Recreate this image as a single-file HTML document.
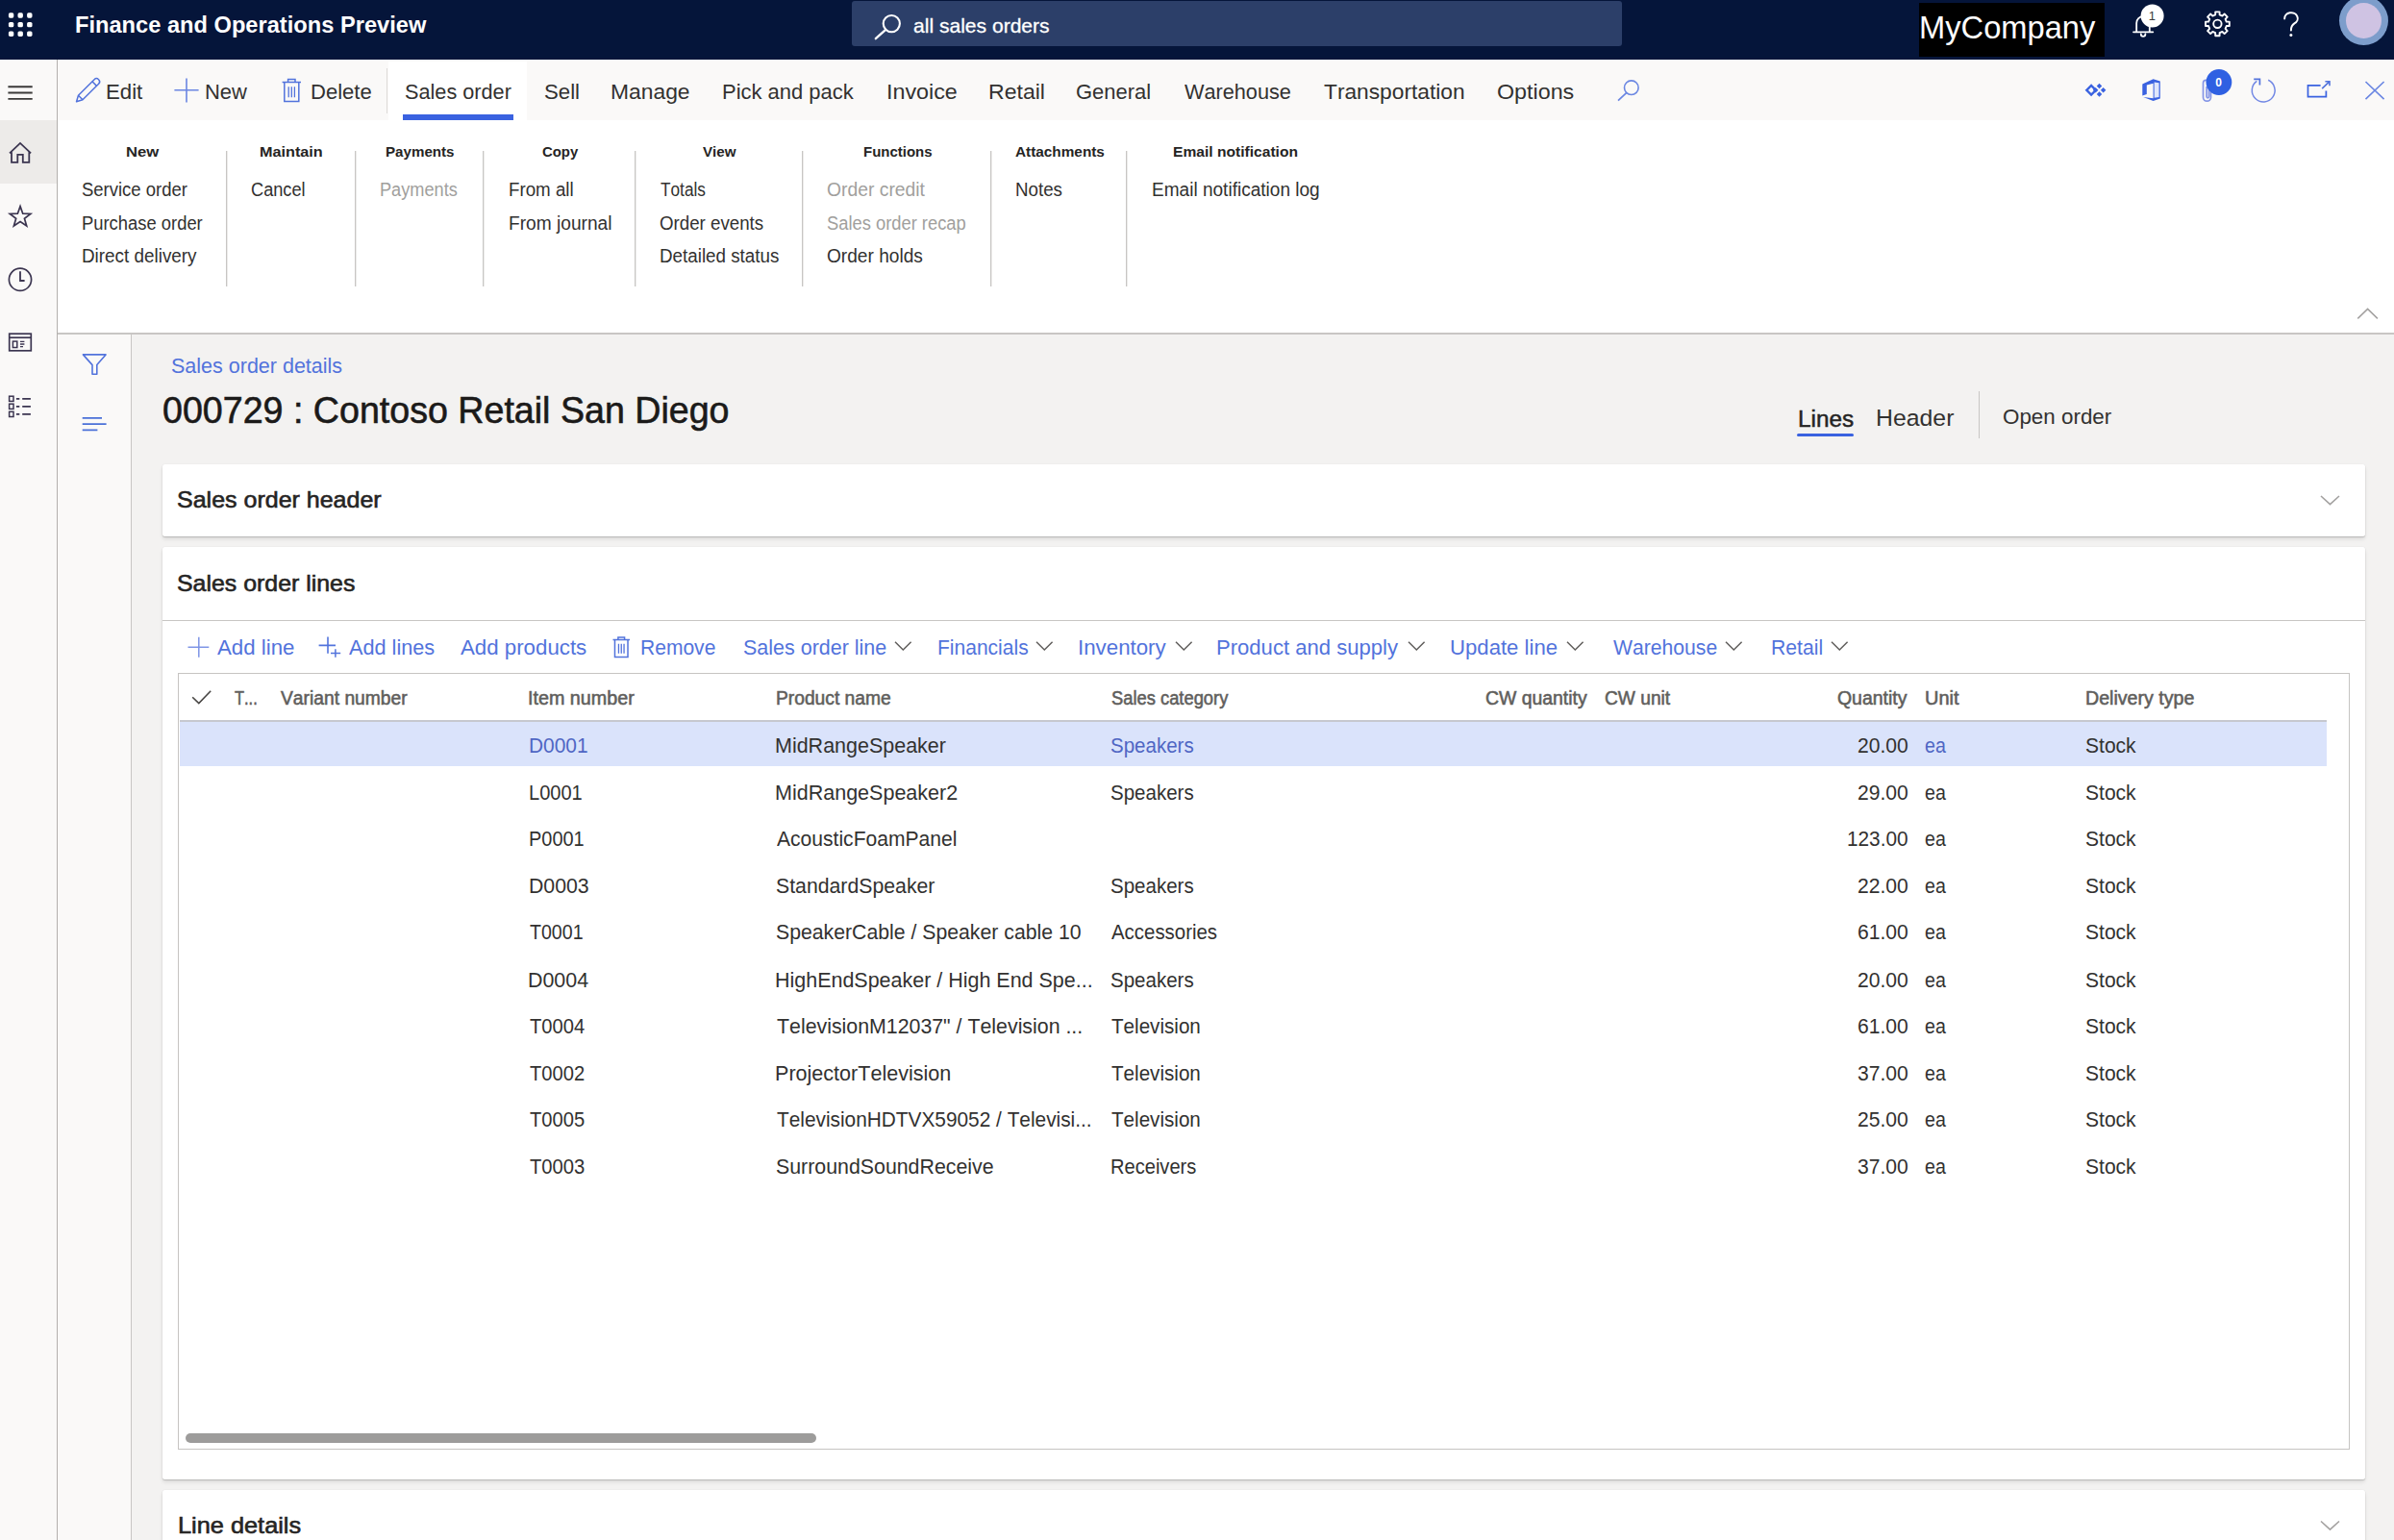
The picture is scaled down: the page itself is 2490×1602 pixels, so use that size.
<!DOCTYPE html>
<html><head><meta charset="utf-8"><title>Sales order details</title>
<style>
html,body{margin:0;padding:0;}
body{width:2490px;height:1602px;overflow:hidden;position:relative;background:#f3f2f1;font-family:"Liberation Sans", sans-serif;}
.t{position:absolute;white-space:pre;font-family:"Liberation Sans", sans-serif;font-kerning:none;}
.b{position:absolute;}
svg{position:absolute;overflow:visible;}
</style></head><body>
<div class="b" style="left:0px;top:0px;width:2490px;height:62px;background:#05153a;"></div>
<div class="b" style="left:886px;top:1px;width:801px;height:47px;background:#2c3f69;border-radius:3px;"></div>
<div class="b" style="left:1996px;top:3px;width:193px;height:56px;background:#000;"></div>
<div class="b" style="left:0px;top:62px;width:59px;height:1540px;background:#faf9f8;"></div>
<div class="b" style="left:0px;top:125.4px;width:59px;height:65.6px;background:#edebe9;"></div>
<div class="b" style="left:59px;top:62px;width:1.4px;height:1540px;background:#b3b0ad;"></div>
<div class="b" style="left:60.3px;top:62px;width:2429.7px;height:63.4px;background:#faf9f8;"></div>
<div class="b" style="left:403.5px;top:64.4px;width:144px;height:61px;background:#fff;"></div>
<div class="b" style="left:402px;top:70.5px;width:1.3px;height:47px;background:#dddbd9;"></div>
<div class="b" style="left:419px;top:119.4px;width:114.7px;height:6.0px;background:#3a62e0;"></div>
<div class="b" style="left:60.3px;top:125.4px;width:2429.7px;height:220.6px;background:#fff;"></div>
<div class="b" style="left:60.3px;top:346px;width:2429.7px;height:1.5px;background:#c8c6c4;"></div>
<div class="b" style="left:60.3px;top:347.5px;width:76px;height:1254.5px;background:#faf9f8;"></div>
<div class="b" style="left:136.2px;top:347.5px;width:1.3px;height:1254.5px;background:#c8c6c4;"></div>
<div class="b" style="left:235px;top:157px;width:1px;height:141px;background:#c8c6c4;"></div>
<div class="b" style="left:236px;top:157px;width:1px;height:141px;background:#ecebea;"></div>
<div class="b" style="left:369px;top:157px;width:1px;height:141px;background:#c8c6c4;"></div>
<div class="b" style="left:370px;top:157px;width:1px;height:141px;background:#ecebea;"></div>
<div class="b" style="left:502px;top:157px;width:1px;height:141px;background:#c8c6c4;"></div>
<div class="b" style="left:503px;top:157px;width:1px;height:141px;background:#ecebea;"></div>
<div class="b" style="left:660px;top:157px;width:1px;height:141px;background:#c8c6c4;"></div>
<div class="b" style="left:661px;top:157px;width:1px;height:141px;background:#ecebea;"></div>
<div class="b" style="left:834px;top:157px;width:1px;height:141px;background:#c8c6c4;"></div>
<div class="b" style="left:835px;top:157px;width:1px;height:141px;background:#ecebea;"></div>
<div class="b" style="left:1030px;top:157px;width:1px;height:141px;background:#c8c6c4;"></div>
<div class="b" style="left:1031px;top:157px;width:1px;height:141px;background:#ecebea;"></div>
<div class="b" style="left:1171px;top:157px;width:1px;height:141px;background:#c8c6c4;"></div>
<div class="b" style="left:1172px;top:157px;width:1px;height:141px;background:#ecebea;"></div>
<div class="b" style="left:2057.5px;top:406.5px;width:1.3px;height:49px;background:#c8c6c4;"></div>
<div class="b" style="left:1868.6px;top:450.6px;width:59px;height:3.8px;background:#3a62e0;border-radius:2px;"></div>
<div class="b" style="left:169px;top:482.5px;width:2291px;height:75.5px;background:#fff;box-shadow:0 1px 1.2px rgba(0,0,0,.17),0 3px 4px rgba(0,0,0,.09),0 0 2px rgba(0,0,0,.05);border-radius:2.5px;"></div>
<div class="b" style="left:169px;top:569.4px;width:2291px;height:970.1px;background:#fff;box-shadow:0 1px 1.2px rgba(0,0,0,.17),0 3px 4px rgba(0,0,0,.09),0 0 2px rgba(0,0,0,.05);border-radius:2.5px;"></div>
<div class="b" style="left:169px;top:1549.5px;width:2291px;height:80px;background:#fff;box-shadow:0 1px 1.2px rgba(0,0,0,.17),0 3px 4px rgba(0,0,0,.09),0 0 2px rgba(0,0,0,.05);border-radius:2.5px;"></div>
<div class="b" style="left:169px;top:645px;width:2291px;height:1.3px;background:#c8c6c4;"></div>
<div class="b" style="left:185px;top:699.8px;width:2259px;height:808.2px;background:#fff;box-sizing:border-box;border:1.5px solid #c6c4c2;"></div>
<div class="b" style="left:186.5px;top:749.2px;width:2233.5px;height:1.5px;background:#c6c8cf;"></div>
<div class="b" style="left:186.5px;top:750.7px;width:2233.5px;height:46.8px;background:#dae3fb;"></div>
<div class="b" style="left:192.5px;top:1491px;width:656.2px;height:9.6px;background:#9d9c9b;border-radius:5px;"></div>
<svg style="left:0px;top:0px" width="60" height="60" viewBox="0 0 60 60" ><rect x="8.899999999999999" y="13.3" width="5.4" height="5.4" rx="1.6" fill="#fff"/><rect x="8.899999999999999" y="22.900000000000002" width="5.4" height="5.4" rx="1.6" fill="#fff"/><rect x="8.899999999999999" y="32.5" width="5.4" height="5.4" rx="1.6" fill="#fff"/><rect x="18.5" y="13.3" width="5.4" height="5.4" rx="1.6" fill="#fff"/><rect x="18.5" y="22.900000000000002" width="5.4" height="5.4" rx="1.6" fill="#fff"/><rect x="18.5" y="32.5" width="5.4" height="5.4" rx="1.6" fill="#fff"/><rect x="28.1" y="13.3" width="5.4" height="5.4" rx="1.6" fill="#fff"/><rect x="28.1" y="22.900000000000002" width="5.4" height="5.4" rx="1.6" fill="#fff"/><rect x="28.1" y="32.5" width="5.4" height="5.4" rx="1.6" fill="#fff"/></svg>
<svg style="left:900px;top:8px" width="50" height="40" viewBox="900 8 50 40" ><circle cx="927.3" cy="24.6" r="8.6" fill="none" stroke="#fff" stroke-width="2.1"/><path d="M921.2 30.8 L910.8 40.2" stroke="#fff" stroke-width="2.3" stroke-linecap="round"/></svg>
<svg style="left:2210px;top:0px" width="50" height="60" viewBox="2210 0 50 60" ><path d="M2219 33.3 H2239.3 M2222.2 33.3 V24 a6.8 6.8 0 0 1 13.6 0 V33.3 M2226.8 35.5 a2.3 2.3 0 0 0 4.6 0" fill="none" stroke="#fff" stroke-width="1.8" stroke-linecap="round"/><circle cx="2238.6" cy="16.6" r="12" fill="#fff"/></svg>
<span class="t" style="left:2234.8px;top:9px;font-size:13px;line-height:16px;color:#3b3a39;">1</span>
<svg style="left:2285px;top:5px" width="45" height="45" viewBox="2285 5 45 45" ><path d="M2318.81 22.63 L2318.81 26.97 L2315.73 27.04 L2314.59 29.82 L2316.71 32.05 L2313.65 35.11 L2311.42 32.99 L2308.64 34.13 L2308.57 37.21 L2304.23 37.21 L2304.16 34.13 L2301.38 32.99 L2299.15 35.11 L2296.09 32.05 L2298.21 29.82 L2297.07 27.04 L2293.99 26.97 L2293.99 22.63 L2297.07 22.56 L2298.21 19.78 L2296.09 17.55 L2299.15 14.49 L2301.38 16.61 L2304.16 15.47 L2304.23 12.39 L2308.57 12.39 L2308.64 15.47 L2311.42 16.61 L2313.65 14.49 L2316.71 17.55 L2314.59 19.78 L2315.73 22.56Z" fill="none" stroke="#fff" stroke-width="1.9" stroke-linejoin="round"/><circle cx="2306.4" cy="24.8" r="4.2" fill="none" stroke="#fff" stroke-width="1.9"/></svg>
<svg style="left:2370px;top:8px" width="30" height="34" viewBox="2370 8 30 34" ><path d="M2376.2 19.4 a6.8 6 0 1 1 10.2 5 c-2.6 1.8 -3.5 3 -3.5 7" fill="none" stroke="#fff" stroke-width="2" stroke-linecap="round"/><circle cx="2382.9" cy="36.4" r="1.5" fill="#fff"/></svg>
<div class="b" style="left:0;top:0;width:2490px;height:62px;overflow:hidden;"><div class="b" style="left:2433.2px;top:-3.6px;width:50.8px;height:50.8px;border-radius:50%;background:#7d9dcb;"></div><div class="b" style="left:2440.2px;top:3.4px;width:36.8px;height:36.8px;border-radius:50%;background:#cfc3e3;"></div></div>
<svg style="left:5px;top:85px" width="32" height="22" viewBox="5 85 32 22" ><path d="M8.4 90.2 H33.7 M8.4 96.5 H33.7 M8.4 102.9 H33.7" stroke="#3b3a39" stroke-width="1.9"/></svg>
<svg style="left:5px;top:145px" width="32" height="28" viewBox="5 145 32 28" ><path d="M10 159.4 L21 148.9 L32.1 159.4 M12 158.2 V168.9 H18.3 V160.8 H23.8 V168.9 H30.3 V158.2" fill="none" stroke="#3b3550" stroke-width="1.8" stroke-linejoin="miter"/></svg>
<svg style="left:5px;top:210px" width="32" height="30" viewBox="5 210 32 30" ><path d="M21.05 214.60 L23.75 222.18 L31.80 222.41 L25.42 227.32 L27.69 235.04 L21.05 230.50 L14.41 235.04 L16.68 227.32 L10.30 222.41 L18.35 222.18Z" fill="none" stroke="#3b3550" stroke-width="1.7" stroke-linejoin="miter"/></svg>
<svg style="left:5px;top:276px" width="32" height="30" viewBox="5 276 32 30" ><circle cx="21" cy="290.8" r="11.6" fill="none" stroke="#3b3550" stroke-width="1.7"/><path d="M21 282.2 V292 H25.6" fill="none" stroke="#3b3550" stroke-width="1.8"/></svg>
<svg style="left:5px;top:343px" width="32" height="26" viewBox="5 343 32 26" ><rect x="9.7" y="347.2" width="22.6" height="17.6" fill="none" stroke="#3b3550" stroke-width="1.7"/><path d="M9.7 351.2 H32.3" stroke="#3b3550" stroke-width="1.7"/><rect x="13.4" y="355.1" width="4.4" height="6.4" fill="none" stroke="#3b3550" stroke-width="1.5"/><path d="M21 355.4 H25.4 M21 358 H25.4 M21 360.7 H24" stroke="#3b3550" stroke-width="1.3"/></svg>
<svg style="left:5px;top:408px" width="32" height="30" viewBox="5 408 32 30" ><rect x="9.6" y="412.2" width="4.4" height="5.2" fill="none" stroke="#3b3550" stroke-width="1.5"/><path d="M16.9 414.8 H20.3 M23.2 414.8 H31.9" stroke="#3b3550" stroke-width="1.7"/><rect x="9.6" y="420.2" width="4.4" height="5.2" fill="none" stroke="#3b3550" stroke-width="1.5"/><path d="M16.9 422.8 H20.3 M23.2 422.8 H31.9" stroke="#3b3550" stroke-width="1.7"/><rect x="9.6" y="428.29999999999995" width="4.4" height="5.2" fill="none" stroke="#3b3550" stroke-width="1.5"/><path d="M16.9 430.9 H20.3 M23.2 430.9 H31.9" stroke="#3b3550" stroke-width="1.7"/></svg>
<svg style="left:75px;top:78px" width="32" height="32" viewBox="75 78 32 32" ><g transform="rotate(-45 91.5 93.8)" fill="none" stroke="#5273dc" stroke-width="1.5" stroke-linejoin="round"><path d="M80.5 90.6 H104 a3.2 3.2 0 0 1 0 6.4 H80.5 L74.6 93.8 Z"/><path d="M80.5 90.6 V97 M101 90.6 V97"/></g></svg>
<svg style="left:178px;top:78px" width="32" height="32" viewBox="178 78 32 32" ><path d="M181.4 93.8 H206.6 M194 81.4 V106.4" stroke="#6a86e2" stroke-width="1.6"/></svg>
<svg style="left:290px;top:78px" width="28" height="32" viewBox="290 78 28 32" ><path d="M293.6 85.40 H313.00 M299.60 85.40 V82.60 H307.00 V85.40 M295.80 85.40 V105.40 H310.80 V85.40" fill="none" stroke="#5273dc" stroke-width="1.5"/><path d="M300.20 90.20 V101.20 M303.30 90.20 V101.20 M306.40 90.20 V101.20" stroke="#5273dc" stroke-width="1.3"/></svg>
<svg style="left:1678px;top:78px" width="32" height="32" viewBox="1678 78 32 32" ><circle cx="1696.8" cy="91.2" r="7.3" fill="none" stroke="#6a86e2" stroke-width="1.6"/><path d="M1691.6 96.6 L1683 104.6" stroke="#6a86e2" stroke-width="1.7"/></svg>
<svg style="left:2165px;top:82px" width="30" height="24" viewBox="2165 82 30 24" ><path d="M2170.2999999999997 93.8 L2175.1 89.0 L2179.9 93.8 L2175.1 98.6Z" fill="none" stroke="#3a62e0" stroke-width="2.4"/><path d="M2180.75 89.6 L2183.5 86.85 L2186.25 89.6 L2183.5 92.35Z" fill="#3a62e0"/><path d="M2184.85 93.8 L2187.6 91.05 L2190.35 93.8 L2187.6 96.55Z" fill="#3a62e0"/><path d="M2180.75 98.0 L2183.5 95.25 L2186.25 98.0 L2183.5 100.75Z" fill="#3a62e0"/><path d="M2176.85 93.8 L2179.6 91.05 L2182.35 93.8 L2179.6 96.55Z" fill="#3a62e0"/></svg>
<svg style="left:2225px;top:80px" width="26" height="28" viewBox="2225 80 26 28" ><path d="M2228.3 99.6 V87.6 L2239.6 82.3 L2246.8 84.6 V102.6 L2239.6 104.9 L2229.2 100.9 L2239.6 102.2 V86.8 L2232.8 88.6 V98 Z" fill="#3a62e0"/><path d="M2240.6 85.6 L2245.6 86.3 V101 L2240.6 101.8Z" fill="#dfe6fb"/></svg>
<svg style="left:2286px;top:70px" width="40" height="40" viewBox="2286 70 40 40" ><path d="M2299.5 88 V101.2 a4 4 0 0 1 -8 0 V86.4 a3 3 0 0 1 6 0 V100.6 a1.2 1.2 0 0 1 -2.4 0 V90" fill="none" stroke="#8495e6" stroke-width="1.7"/><circle cx="2307.9" cy="85.5" r="13.4" fill="#2f60e2"/></svg>
<span class="t" style="left:2304.2px;top:77.6px;font-size:12px;line-height:16px;color:#fff;font-weight:700;">0</span>
<svg style="left:2338px;top:78px" width="32" height="32" viewBox="2338 78 32 32" ><path d="M2359.2 83.3 A11.9 11.9 0 1 1 2347.3 84.4" fill="none" stroke="#7288e4" stroke-width="1.5"/><path d="M2344.2 82.4 H2350.4 V88.4" fill="none" stroke="#5273dc" stroke-width="1.7"/></svg>
<svg style="left:2396px;top:80px" width="30" height="26" viewBox="2396 80 30 26" ><path d="M2413.6 88.9 H2400.5 V100.7 H2419.4 V94.6" fill="none" stroke="#3a62e0" stroke-width="1.7"/><path d="M2415.2 92.2 L2422.8 84.9 M2418.4 84.7 H2423 V89.3" fill="none" stroke="#5273dc" stroke-width="1.6"/></svg>
<svg style="left:2456px;top:80px" width="28" height="28" viewBox="2456 80 28 28" ><path d="M2460.5 85 L2479.6 103.2 M2479.6 85 L2460.5 103.2" stroke="#6a86e2" stroke-width="1.6"/></svg>
<svg style="left:2448px;top:316px" width="30" height="20" viewBox="2448 316 30 20" ><path d="M2452.3 331.4 L2462.6 321.4 L2472.9 331.4" fill="none" stroke="#a3a1a0" stroke-width="1.5"/></svg>
<svg style="left:2410px;top:512px" width="28" height="16" viewBox="2410 512 28 16" ><path d="M2414 516 L2423.5 524.6 L2433 516" fill="none" stroke="#a3a1a0" stroke-width="1.6"/></svg>
<svg style="left:2410px;top:1578px" width="28" height="16" viewBox="2410 1578 28 16" ><path d="M2414 1582.5 L2423.5 1591.1 L2433 1582.5" fill="none" stroke="#a3a1a0" stroke-width="1.6"/></svg>
<svg style="left:82px;top:364px" width="32" height="30" viewBox="82 364 32 30" ><path d="M86.4 368.9 H110 L100.8 379.6 V389.2 H96 V379.6 Z" fill="none" stroke="#5273dc" stroke-width="1.6" stroke-linejoin="round"/></svg>
<svg style="left:82px;top:430px" width="32" height="22" viewBox="82 430 32 22" ><path d="M85.7 434.9 H106 M85.7 441.2 H110.6 M85.7 447.3 H101.4" stroke="#4a70d8" stroke-width="1.7"/></svg>
<svg style="left:192px;top:660px" width="28" height="26" viewBox="192 660 28 26" ><path d="M195.5 673.3 H217.3 M206.8 662.8 V683.8" stroke="#7f95e6" stroke-width="1.5"/></svg>
<svg style="left:328px;top:660px" width="28" height="26" viewBox="328 660 28 26" ><path d="M331.6 671.4 H349 M341 662.4 V679.7" stroke="#5273dc" stroke-width="1.6"/><path d="M344 679.4 H354.2 M348.9 675.2 V683.8" stroke="#5273dc" stroke-width="1.5"/></svg>
<svg style="left:634px;top:658px" width="24" height="30" viewBox="634 658 24 30" ><path d="M637.5 665.46 H655.00 M642.91 665.46 V663.00 H649.59 V665.46 M639.48 665.46 V683.40 H653.02 V665.46" fill="none" stroke="#5273dc" stroke-width="1.5"/><path d="M643.45 669.78 V679.68 M646.25 669.78 V679.68 M649.05 669.78 V679.68" stroke="#5273dc" stroke-width="1.3"/></svg>
<svg style="left:929.2px;top:664px" width="22" height="16" viewBox="929.2 664 22 16" ><path d="M931.2 667.8 L939.5 676 L947.8000000000001 667.8" fill="none" stroke="#605e5c" stroke-width="1.5"/></svg>
<svg style="left:1076.3px;top:664px" width="22" height="16" viewBox="1076.3 664 22 16" ><path d="M1078.3 667.8 L1086.6 676 L1094.8999999999999 667.8" fill="none" stroke="#605e5c" stroke-width="1.5"/></svg>
<svg style="left:1221px;top:664px" width="22" height="16" viewBox="1221 664 22 16" ><path d="M1223 667.8 L1231.3 676 L1239.6 667.8" fill="none" stroke="#605e5c" stroke-width="1.5"/></svg>
<svg style="left:1462.7px;top:664px" width="22" height="16" viewBox="1462.7 664 22 16" ><path d="M1464.7 667.8 L1473.0 676 L1481.3 667.8" fill="none" stroke="#605e5c" stroke-width="1.5"/></svg>
<svg style="left:1627.9px;top:664px" width="22" height="16" viewBox="1627.9 664 22 16" ><path d="M1629.9 667.8 L1638.2 676 L1646.5 667.8" fill="none" stroke="#605e5c" stroke-width="1.5"/></svg>
<svg style="left:1792.5px;top:664px" width="22" height="16" viewBox="1792.5 664 22 16" ><path d="M1794.5 667.8 L1802.8 676 L1811.1 667.8" fill="none" stroke="#605e5c" stroke-width="1.5"/></svg>
<svg style="left:1902.7px;top:664px" width="22" height="16" viewBox="1902.7 664 22 16" ><path d="M1904.7 667.8 L1913.0 676 L1921.3 667.8" fill="none" stroke="#605e5c" stroke-width="1.5"/></svg>
<svg style="left:196px;top:714px" width="28" height="22" viewBox="196 714 28 22" ><path d="M200.2 725.2 L206.8 731.6 L219.2 718.8" fill="none" stroke="#484644" stroke-width="1.6"/></svg>
<span class="t" style="left:78.00px;top:10px;color:#ffffff;font-size:24.5px;line-height:31px;transform-origin:0 0;transform:scaleX(0.9651);font-weight:700;">Finance and Operations Preview</span>
<span class="t" style="left:950.40px;top:13px;color:#ffffff;font-size:21px;line-height:27px;transform-origin:0 0;transform:scaleX(1.0028);-webkit-text-stroke:0.3px #ffffff;">all sales orders</span>
<span class="t" style="left:1996.30px;top:7px;color:#ffffff;font-size:34px;line-height:43px;transform-origin:0 0;transform:scaleX(0.9607);">MyCompany</span>
<span class="t" style="left:109.50px;top:82px;color:#323130;font-size:22.4px;line-height:28px;transform-origin:0 0;transform:scaleX(0.9925);">Edit</span>
<span class="t" style="left:213.00px;top:82px;color:#323130;font-size:22.4px;line-height:28px;transform-origin:0 0;transform:scaleX(0.9815);">New</span>
<span class="t" style="left:323.00px;top:82px;color:#323130;font-size:22.4px;line-height:28px;transform-origin:0 0;transform:scaleX(0.9839);">Delete</span>
<span class="t" style="left:420.80px;top:82px;color:#323130;font-size:22.4px;line-height:28px;transform-origin:0 0;transform:scaleX(0.9682);">Sales order</span>
<span class="t" style="left:565.80px;top:82px;color:#323130;font-size:22.4px;line-height:28px;transform-origin:0 0;transform:scaleX(0.9915);">Sell</span>
<span class="t" style="left:634.80px;top:82px;color:#323130;font-size:22.4px;line-height:28px;transform-origin:0 0;transform:scaleX(1.0206);">Manage</span>
<span class="t" style="left:750.90px;top:82px;color:#323130;font-size:22.4px;line-height:28px;transform-origin:0 0;transform:scaleX(0.9803);">Pick and pack</span>
<span class="t" style="left:921.80px;top:82px;color:#323130;font-size:22.4px;line-height:28px;transform-origin:0 0;transform:scaleX(1.0397);">Invoice</span>
<span class="t" style="left:1027.80px;top:82px;color:#323130;font-size:22.4px;line-height:28px;transform-origin:0 0;transform:scaleX(1.0297);">Retail</span>
<span class="t" style="left:1119.00px;top:82px;color:#323130;font-size:22.4px;line-height:28px;transform-origin:0 0;transform:scaleX(0.9808);">General</span>
<span class="t" style="left:1231.80px;top:82px;color:#323130;font-size:22.4px;line-height:28px;transform-origin:0 0;transform:scaleX(0.9685);">Warehouse</span>
<span class="t" style="left:1377.40px;top:82px;color:#323130;font-size:22.4px;line-height:28px;transform-origin:0 0;transform:scaleX(1.0154);">Transportation</span>
<span class="t" style="left:1556.60px;top:82px;color:#323130;font-size:22.4px;line-height:28px;transform-origin:0 0;transform:scaleX(1.0395);">Options</span>
<span class="t" style="left:131.30px;top:148px;color:#252423;font-size:15.5px;line-height:20px;transform-origin:0 0;transform:scaleX(1.0742);font-weight:700;">New</span>
<span class="t" style="left:270.20px;top:148px;color:#252423;font-size:15.5px;line-height:20px;transform-origin:0 0;transform:scaleX(1.0460);font-weight:700;">Maintain</span>
<span class="t" style="left:401.30px;top:148px;color:#252423;font-size:15.5px;line-height:20px;transform-origin:0 0;transform:scaleX(0.9764);font-weight:700;">Payments</span>
<span class="t" style="left:564.00px;top:148px;color:#252423;font-size:15.5px;line-height:20px;transform-origin:0 0;transform:scaleX(0.9617);font-weight:700;">Copy</span>
<span class="t" style="left:731.00px;top:148px;color:#252423;font-size:15.5px;line-height:20px;transform-origin:0 0;transform:scaleX(0.9780);font-weight:700;">View</span>
<span class="t" style="left:897.50px;top:148px;color:#252423;font-size:15.5px;line-height:20px;transform-origin:0 0;transform:scaleX(0.9671);font-weight:700;">Functions</span>
<span class="t" style="left:1055.60px;top:148px;color:#252423;font-size:15.5px;line-height:20px;transform-origin:0 0;transform:scaleX(0.9894);font-weight:700;">Attachments</span>
<span class="t" style="left:1220.00px;top:148px;color:#252423;font-size:15.5px;line-height:20px;transform-origin:0 0;transform:scaleX(1.0063);font-weight:700;">Email notification</span>
<span class="t" style="left:85.00px;top:185px;color:#323130;font-size:19.5px;line-height:25px;transform-origin:0 0;transform:scaleX(0.9478);">Service order</span>
<span class="t" style="left:85.00px;top:220px;color:#323130;font-size:19.5px;line-height:25px;transform-origin:0 0;transform:scaleX(0.9432);">Purchase order</span>
<span class="t" style="left:85.00px;top:254px;color:#323130;font-size:19.5px;line-height:25px;transform-origin:0 0;transform:scaleX(0.9675);">Direct delivery</span>
<span class="t" style="left:261.00px;top:185px;color:#323130;font-size:19.5px;line-height:25px;transform-origin:0 0;transform:scaleX(0.9322);">Cancel</span>
<span class="t" style="left:395.00px;top:185px;color:#a19f9d;font-size:19.5px;line-height:25px;transform-origin:0 0;transform:scaleX(0.9318);">Payments</span>
<span class="t" style="left:528.60px;top:185px;color:#323130;font-size:19.5px;line-height:25px;transform-origin:0 0;transform:scaleX(0.9605);">From all</span>
<span class="t" style="left:528.60px;top:220px;color:#323130;font-size:19.5px;line-height:25px;transform-origin:0 0;transform:scaleX(0.9823);">From journal</span>
<span class="t" style="left:687.20px;top:185px;color:#323130;font-size:19.5px;line-height:25px;transform-origin:0 0;transform:scaleX(0.8831);">Totals</span>
<span class="t" style="left:686.20px;top:220px;color:#323130;font-size:19.5px;line-height:25px;transform-origin:0 0;transform:scaleX(0.9595);">Order events</span>
<span class="t" style="left:686.20px;top:254px;color:#323130;font-size:19.5px;line-height:25px;transform-origin:0 0;transform:scaleX(0.9641);">Detailed status</span>
<span class="t" style="left:860.00px;top:185px;color:#a19f9d;font-size:19.5px;line-height:25px;transform-origin:0 0;transform:scaleX(0.9902);">Order credit</span>
<span class="t" style="left:860.00px;top:220px;color:#a19f9d;font-size:19.5px;line-height:25px;transform-origin:0 0;transform:scaleX(0.9401);">Sales order recap</span>
<span class="t" style="left:860.00px;top:254px;color:#323130;font-size:19.5px;line-height:25px;transform-origin:0 0;transform:scaleX(0.9803);">Order holds</span>
<span class="t" style="left:1056.00px;top:185px;color:#323130;font-size:19.5px;line-height:25px;transform-origin:0 0;transform:scaleX(0.9600);">Notes</span>
<span class="t" style="left:1197.70px;top:185px;color:#323130;font-size:19.5px;line-height:25px;transform-origin:0 0;transform:scaleX(0.9768);">Email notification log</span>
<span class="t" style="left:177.70px;top:367px;color:#5273dc;font-size:22px;line-height:28px;transform-origin:0 0;transform:scaleX(0.9774);">Sales order details</span>
<span class="t" style="left:169.00px;top:403px;color:#1b1a19;font-size:38.3px;line-height:48px;transform-origin:0 0;transform:scaleX(0.9819);-webkit-text-stroke:0.6px #1b1a19;">000729 : Contoso Retail San Diego</span>
<span class="t" style="left:1869.50px;top:420px;color:#252423;font-size:24.2px;line-height:31px;transform-origin:0 0;transform:scaleX(1.0037);-webkit-text-stroke:0.5px #252423;">Lines</span>
<span class="t" style="left:1950.50px;top:419px;color:#323130;font-size:24.3px;line-height:31px;transform-origin:0 0;transform:scaleX(1.0219);">Header</span>
<span class="t" style="left:2083.00px;top:420px;color:#323130;font-size:22.4px;line-height:28px;transform-origin:0 0;transform:scaleX(1.0000);">Open order</span>
<span class="t" style="left:184.00px;top:504px;color:#252423;font-size:24.3px;line-height:31px;transform-origin:0 0;transform:scaleX(1.0291);-webkit-text-stroke:0.6px #252423;">Sales order header</span>
<span class="t" style="left:184.00px;top:591px;color:#252423;font-size:24.3px;line-height:31px;transform-origin:0 0;transform:scaleX(1.0244);-webkit-text-stroke:0.6px #252423;">Sales order lines</span>
<span class="t" style="left:184.60px;top:1571px;color:#252423;font-size:24.3px;line-height:31px;transform-origin:0 0;transform:scaleX(1.0426);-webkit-text-stroke:0.6px #252423;">Line details</span>
<span class="t" style="left:226.40px;top:660px;color:#5273dc;font-size:22.4px;line-height:28px;transform-origin:0 0;transform:scaleX(0.9938);">Add line</span>
<span class="t" style="left:362.50px;top:660px;color:#5273dc;font-size:22.4px;line-height:28px;transform-origin:0 0;transform:scaleX(0.9685);">Add lines</span>
<span class="t" style="left:478.80px;top:660px;color:#5273dc;font-size:22.4px;line-height:28px;transform-origin:0 0;transform:scaleX(0.9947);">Add products</span>
<span class="t" style="left:665.80px;top:660px;color:#5273dc;font-size:22.4px;line-height:28px;transform-origin:0 0;transform:scaleX(0.9395);">Remove</span>
<span class="t" style="left:772.80px;top:660px;color:#5273dc;font-size:22.4px;line-height:28px;transform-origin:0 0;transform:scaleX(0.9591);">Sales order line</span>
<span class="t" style="left:975.00px;top:660px;color:#5273dc;font-size:22.4px;line-height:28px;transform-origin:0 0;transform:scaleX(0.9389);">Financials</span>
<span class="t" style="left:1121.40px;top:660px;color:#5273dc;font-size:22.4px;line-height:28px;transform-origin:0 0;transform:scaleX(0.9956);">Inventory</span>
<span class="t" style="left:1265.30px;top:660px;color:#5273dc;font-size:22.4px;line-height:28px;transform-origin:0 0;transform:scaleX(0.9858);">Product and supply</span>
<span class="t" style="left:1508.00px;top:660px;color:#5273dc;font-size:22.4px;line-height:28px;transform-origin:0 0;transform:scaleX(0.9893);">Update line</span>
<span class="t" style="left:1677.50px;top:660px;color:#5273dc;font-size:22.4px;line-height:28px;transform-origin:0 0;transform:scaleX(0.9447);">Warehouse</span>
<span class="t" style="left:1842.30px;top:660px;color:#5273dc;font-size:22.4px;line-height:28px;transform-origin:0 0;transform:scaleX(0.9464);">Retail</span>
<span class="t" style="left:244.00px;top:714px;color:#605e5c;font-size:19.4px;line-height:25px;transform-origin:0 0;transform:scaleX(0.8487);-webkit-text-stroke:0.55px #605e5c;">T...</span>
<span class="t" style="left:292.00px;top:714px;color:#605e5c;font-size:19.4px;line-height:25px;transform-origin:0 0;transform:scaleX(0.9933);-webkit-text-stroke:0.55px #605e5c;">Variant number</span>
<span class="t" style="left:549.20px;top:714px;color:#605e5c;font-size:19.4px;line-height:25px;transform-origin:0 0;transform:scaleX(1.0176);-webkit-text-stroke:0.55px #605e5c;">Item number</span>
<span class="t" style="left:807.00px;top:714px;color:#605e5c;font-size:19.4px;line-height:25px;transform-origin:0 0;transform:scaleX(0.9917);-webkit-text-stroke:0.55px #605e5c;">Product name</span>
<span class="t" style="left:1155.50px;top:714px;color:#605e5c;font-size:19.4px;line-height:25px;transform-origin:0 0;transform:scaleX(0.9457);-webkit-text-stroke:0.55px #605e5c;">Sales category</span>
<span class="t" style="left:1545.00px;top:714px;color:#605e5c;font-size:19.4px;line-height:25px;transform-origin:0 0;transform:scaleX(1.0000);-webkit-text-stroke:0.55px #605e5c;">CW quantity</span>
<span class="t" style="left:1668.80px;top:714px;color:#605e5c;font-size:19.4px;line-height:25px;transform-origin:0 0;transform:scaleX(0.9885);-webkit-text-stroke:0.55px #605e5c;">CW unit</span>
<span class="t" style="left:1910.80px;top:714px;color:#605e5c;font-size:19.4px;line-height:25px;transform-origin:0 0;transform:scaleX(1.0028);-webkit-text-stroke:0.55px #605e5c;">Quantity</span>
<span class="t" style="left:2001.60px;top:714px;color:#605e5c;font-size:19.4px;line-height:25px;transform-origin:0 0;transform:scaleX(1.0294);-webkit-text-stroke:0.55px #605e5c;">Unit</span>
<span class="t" style="left:2168.70px;top:714px;color:#605e5c;font-size:19.4px;line-height:25px;transform-origin:0 0;transform:scaleX(1.0117);-webkit-text-stroke:0.55px #605e5c;">Delivery type</span>
<span class="t" style="left:549.60px;top:762px;color:#4f66c4;font-size:22.4px;line-height:28px;transform-origin:0 0;transform:scaleX(0.9337);">D0001</span>
<span class="t" style="left:806.00px;top:762px;color:#323130;font-size:22.4px;line-height:28px;transform-origin:0 0;transform:scaleX(0.9596);">MidRangeSpeaker</span>
<span class="t" style="left:1154.80px;top:762px;color:#4f66c4;font-size:22.4px;line-height:28px;transform-origin:0 0;transform:scaleX(0.9162);">Speakers</span>
<span class="t" style="left:1932.10px;top:762px;color:#323130;font-size:22.4px;line-height:28px;transform-origin:0 0;transform:scaleX(0.9427);">20.00</span>
<span class="t" style="left:2002.00px;top:762px;color:#4f66c4;font-size:22.4px;line-height:28px;transform-origin:0 0;transform:scaleX(0.8750);">ea</span>
<span class="t" style="left:2168.50px;top:762px;color:#323130;font-size:22.4px;line-height:28px;transform-origin:0 0;transform:scaleX(0.9400);">Stock</span>
<span class="t" style="left:549.60px;top:811px;color:#323130;font-size:22.4px;line-height:28px;transform-origin:0 0;transform:scaleX(0.8957);">L0001</span>
<span class="t" style="left:806.00px;top:811px;color:#323130;font-size:22.4px;line-height:28px;transform-origin:0 0;transform:scaleX(0.9610);">MidRangeSpeaker2</span>
<span class="t" style="left:1154.80px;top:811px;color:#323130;font-size:22.4px;line-height:28px;transform-origin:0 0;transform:scaleX(0.9162);">Speakers</span>
<span class="t" style="left:1932.10px;top:811px;color:#323130;font-size:22.4px;line-height:28px;transform-origin:0 0;transform:scaleX(0.9427);">29.00</span>
<span class="t" style="left:2002.00px;top:811px;color:#323130;font-size:22.4px;line-height:28px;transform-origin:0 0;transform:scaleX(0.8750);">ea</span>
<span class="t" style="left:2168.50px;top:811px;color:#323130;font-size:22.4px;line-height:28px;transform-origin:0 0;transform:scaleX(0.9400);">Stock</span>
<span class="t" style="left:549.60px;top:859px;color:#323130;font-size:22.4px;line-height:28px;transform-origin:0 0;transform:scaleX(0.8906);">P0001</span>
<span class="t" style="left:808.00px;top:859px;color:#323130;font-size:22.4px;line-height:28px;transform-origin:0 0;transform:scaleX(0.9414);">AcousticFoamPanel</span>
<span class="t" style="left:1921.00px;top:859px;color:#323130;font-size:22.4px;line-height:28px;transform-origin:0 0;transform:scaleX(0.9284);">123.00</span>
<span class="t" style="left:2002.00px;top:859px;color:#323130;font-size:22.4px;line-height:28px;transform-origin:0 0;transform:scaleX(0.8750);">ea</span>
<span class="t" style="left:2168.50px;top:859px;color:#323130;font-size:22.4px;line-height:28px;transform-origin:0 0;transform:scaleX(0.9400);">Stock</span>
<span class="t" style="left:549.60px;top:908px;color:#323130;font-size:22.4px;line-height:28px;transform-origin:0 0;transform:scaleX(0.9493);">D0003</span>
<span class="t" style="left:807.00px;top:908px;color:#323130;font-size:22.4px;line-height:28px;transform-origin:0 0;transform:scaleX(0.9491);">StandardSpeaker</span>
<span class="t" style="left:1154.80px;top:908px;color:#323130;font-size:22.4px;line-height:28px;transform-origin:0 0;transform:scaleX(0.9162);">Speakers</span>
<span class="t" style="left:1932.10px;top:908px;color:#323130;font-size:22.4px;line-height:28px;transform-origin:0 0;transform:scaleX(0.9427);">22.00</span>
<span class="t" style="left:2002.00px;top:908px;color:#323130;font-size:22.4px;line-height:28px;transform-origin:0 0;transform:scaleX(0.8750);">ea</span>
<span class="t" style="left:2168.50px;top:908px;color:#323130;font-size:22.4px;line-height:28px;transform-origin:0 0;transform:scaleX(0.9400);">Stock</span>
<span class="t" style="left:551.20px;top:956px;color:#323130;font-size:22.4px;line-height:28px;transform-origin:0 0;transform:scaleX(0.8747);">T0001</span>
<span class="t" style="left:807.00px;top:956px;color:#323130;font-size:22.4px;line-height:28px;transform-origin:0 0;transform:scaleX(0.9484);">SpeakerCable / Speaker cable 10</span>
<span class="t" style="left:1155.80px;top:956px;color:#323130;font-size:22.4px;line-height:28px;transform-origin:0 0;transform:scaleX(0.9117);">Accessories</span>
<span class="t" style="left:1932.10px;top:956px;color:#323130;font-size:22.4px;line-height:28px;transform-origin:0 0;transform:scaleX(0.9427);">61.00</span>
<span class="t" style="left:2002.00px;top:956px;color:#323130;font-size:22.4px;line-height:28px;transform-origin:0 0;transform:scaleX(0.8750);">ea</span>
<span class="t" style="left:2168.50px;top:956px;color:#323130;font-size:22.4px;line-height:28px;transform-origin:0 0;transform:scaleX(0.9400);">Stock</span>
<span class="t" style="left:548.60px;top:1006px;color:#323130;font-size:22.4px;line-height:28px;transform-origin:0 0;transform:scaleX(0.9563);">D0004</span>
<span class="t" style="left:806.00px;top:1006px;color:#323130;font-size:22.4px;line-height:28px;transform-origin:0 0;transform:scaleX(0.9589);">HighEndSpeaker / High End Spe...</span>
<span class="t" style="left:1154.80px;top:1006px;color:#323130;font-size:22.4px;line-height:28px;transform-origin:0 0;transform:scaleX(0.9162);">Speakers</span>
<span class="t" style="left:1932.10px;top:1006px;color:#323130;font-size:22.4px;line-height:28px;transform-origin:0 0;transform:scaleX(0.9427);">20.00</span>
<span class="t" style="left:2002.00px;top:1006px;color:#323130;font-size:22.4px;line-height:28px;transform-origin:0 0;transform:scaleX(0.8750);">ea</span>
<span class="t" style="left:2168.50px;top:1006px;color:#323130;font-size:22.4px;line-height:28px;transform-origin:0 0;transform:scaleX(0.9400);">Stock</span>
<span class="t" style="left:551.20px;top:1054px;color:#323130;font-size:22.4px;line-height:28px;transform-origin:0 0;transform:scaleX(0.9000);">T0004</span>
<span class="t" style="left:807.50px;top:1054px;color:#323130;font-size:22.4px;line-height:28px;transform-origin:0 0;transform:scaleX(0.9527);">TelevisionM12037&quot; / Television ...</span>
<span class="t" style="left:1156.00px;top:1054px;color:#323130;font-size:22.4px;line-height:28px;transform-origin:0 0;transform:scaleX(0.9210);">Television</span>
<span class="t" style="left:1932.10px;top:1054px;color:#323130;font-size:22.4px;line-height:28px;transform-origin:0 0;transform:scaleX(0.9427);">61.00</span>
<span class="t" style="left:2002.00px;top:1054px;color:#323130;font-size:22.4px;line-height:28px;transform-origin:0 0;transform:scaleX(0.8750);">ea</span>
<span class="t" style="left:2168.50px;top:1054px;color:#323130;font-size:22.4px;line-height:28px;transform-origin:0 0;transform:scaleX(0.9400);">Stock</span>
<span class="t" style="left:551.20px;top:1103px;color:#323130;font-size:22.4px;line-height:28px;transform-origin:0 0;transform:scaleX(0.9000);">T0002</span>
<span class="t" style="left:806.00px;top:1103px;color:#323130;font-size:22.4px;line-height:28px;transform-origin:0 0;transform:scaleX(0.9626);">ProjectorTelevision</span>
<span class="t" style="left:1156.00px;top:1103px;color:#323130;font-size:22.4px;line-height:28px;transform-origin:0 0;transform:scaleX(0.9210);">Television</span>
<span class="t" style="left:1932.10px;top:1103px;color:#323130;font-size:22.4px;line-height:28px;transform-origin:0 0;transform:scaleX(0.9427);">37.00</span>
<span class="t" style="left:2002.00px;top:1103px;color:#323130;font-size:22.4px;line-height:28px;transform-origin:0 0;transform:scaleX(0.8750);">ea</span>
<span class="t" style="left:2168.50px;top:1103px;color:#323130;font-size:22.4px;line-height:28px;transform-origin:0 0;transform:scaleX(0.9400);">Stock</span>
<span class="t" style="left:551.20px;top:1151px;color:#323130;font-size:22.4px;line-height:28px;transform-origin:0 0;transform:scaleX(0.9000);">T0005</span>
<span class="t" style="left:807.50px;top:1151px;color:#323130;font-size:22.4px;line-height:28px;transform-origin:0 0;transform:scaleX(0.9302);">TelevisionHDTVX59052 / Televisi...</span>
<span class="t" style="left:1156.00px;top:1151px;color:#323130;font-size:22.4px;line-height:28px;transform-origin:0 0;transform:scaleX(0.9210);">Television</span>
<span class="t" style="left:1932.10px;top:1151px;color:#323130;font-size:22.4px;line-height:28px;transform-origin:0 0;transform:scaleX(0.9427);">25.00</span>
<span class="t" style="left:2002.00px;top:1151px;color:#323130;font-size:22.4px;line-height:28px;transform-origin:0 0;transform:scaleX(0.8750);">ea</span>
<span class="t" style="left:2168.50px;top:1151px;color:#323130;font-size:22.4px;line-height:28px;transform-origin:0 0;transform:scaleX(0.9400);">Stock</span>
<span class="t" style="left:551.20px;top:1200px;color:#323130;font-size:22.4px;line-height:28px;transform-origin:0 0;transform:scaleX(0.9033);">T0003</span>
<span class="t" style="left:807.00px;top:1200px;color:#323130;font-size:22.4px;line-height:28px;transform-origin:0 0;transform:scaleX(0.9530);">SurroundSoundReceive</span>
<span class="t" style="left:1154.80px;top:1200px;color:#323130;font-size:22.4px;line-height:28px;transform-origin:0 0;transform:scaleX(0.8970);">Receivers</span>
<span class="t" style="left:1932.10px;top:1200px;color:#323130;font-size:22.4px;line-height:28px;transform-origin:0 0;transform:scaleX(0.9427);">37.00</span>
<span class="t" style="left:2002.00px;top:1200px;color:#323130;font-size:22.4px;line-height:28px;transform-origin:0 0;transform:scaleX(0.8750);">ea</span>
<span class="t" style="left:2168.50px;top:1200px;color:#323130;font-size:22.4px;line-height:28px;transform-origin:0 0;transform:scaleX(0.9400);">Stock</span>
</body></html>
